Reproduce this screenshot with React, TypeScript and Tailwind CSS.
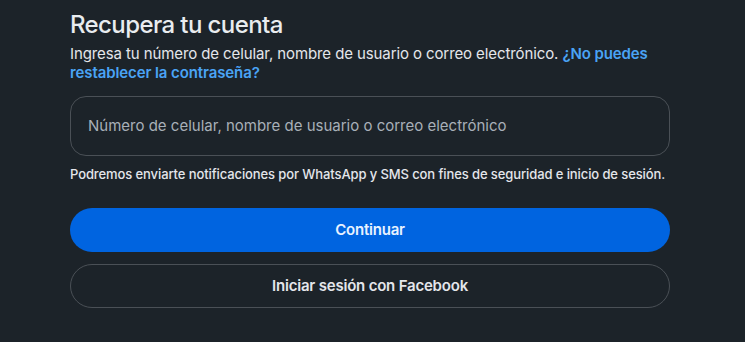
export default function App() {
  return (
    <div className="min-h-[342px] w-full bg-[#1c2329] font-['Inter',_'Roboto',_sans-serif] text-[#e4e6eb]">
      <div className="ml-[70px] w-[600px] pt-[9px]">
        <h1 className="text-[24px] font-medium leading-[32px] tracking-[-0.6px] text-[#e9ecef]">Recupera tu cuenta</h1>
        <p className="mt-[3px] text-[15px] leading-[19px] tracking-[-0.1px] text-[#e4e6eb]">
          Ingresa tu número de celular, nombre de usuario o correo electrónico.{" "}
          <a href="#" className="font-semibold text-[#4aa3f5]">
            ¿No puedes restablecer la contraseña?
          </a>
        </p>
        <div className="mt-[14px] flex h-[60px] items-center rounded-[16px] border border-[#4a5056] px-[17px]">
          <input
            className="w-full bg-transparent text-[15px] text-[#e4e6eb] outline-none placeholder:text-[#a8b0b8]"
            placeholder="Número de celular, nombre de usuario o correo electrónico"
          />
        </div>
        <p className="mt-[10px] text-[13px] font-medium leading-[17px] tracking-[-0.1px] text-[#e4e6eb]">
          Podremos enviarte notificaciones por WhatsApp y SMS con fines de seguridad e inicio de sesión.
        </p>
        <button className="mt-[25px] flex h-[44px] w-full items-center justify-center rounded-full bg-[#0064e0] text-[15px] font-semibold tracking-[-0.2px] text-[#e8f2ff]">
          Continuar
        </button>
        <button className="mt-[12px] flex h-[44px] w-full items-center justify-center rounded-full border border-[#4a5056] text-[15px] font-semibold tracking-[-0.2px] text-[#e4e6eb]">
          Iniciar sesión con Facebook
        </button>
      </div>
    </div>
  );
}
